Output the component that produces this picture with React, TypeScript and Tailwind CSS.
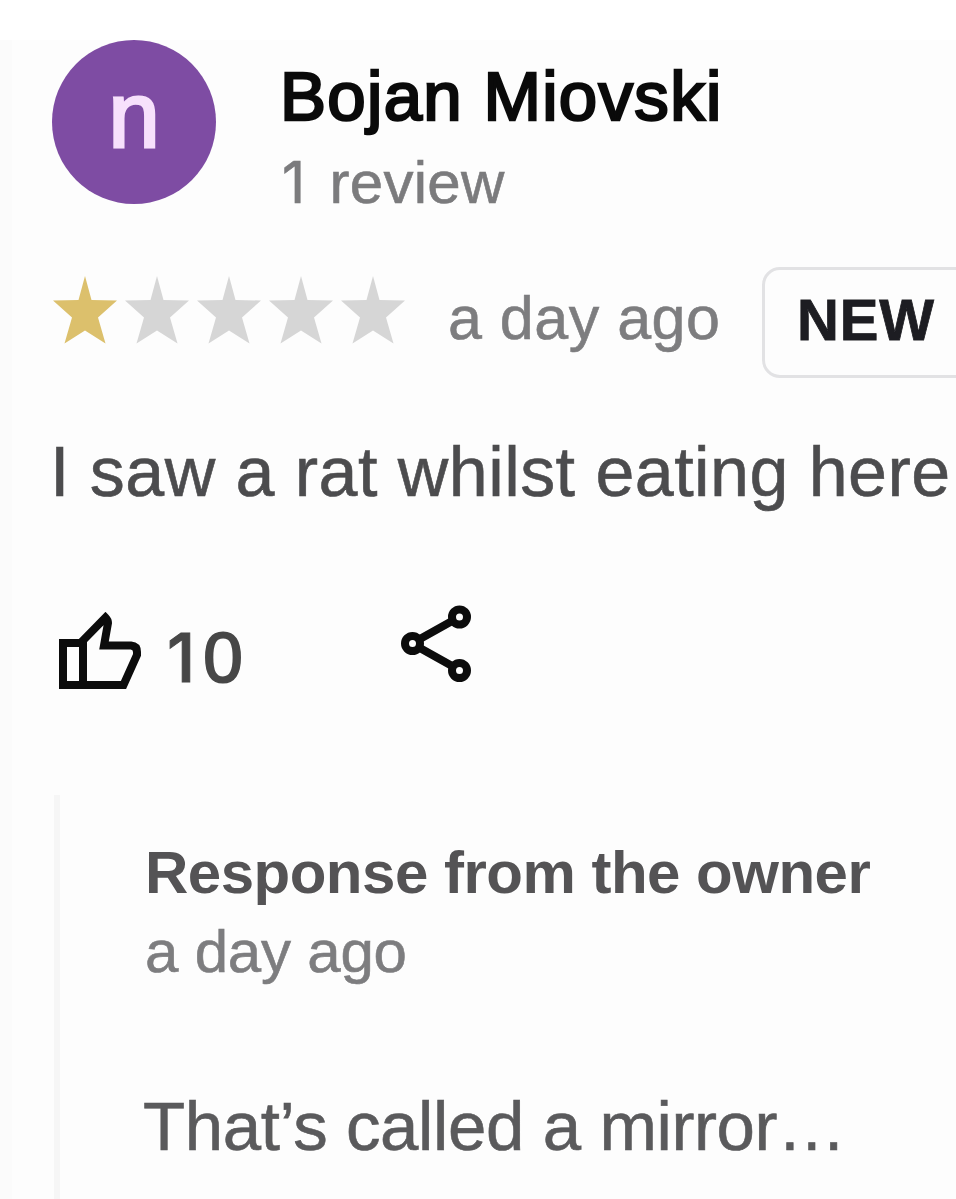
const STARS = [true, false, false, false, false];

function Star({ filled }: { filled: boolean }) {
  return (
    <svg viewBox="0 0 72 68" className={filled ? "h-[68px] w-[72px] text-[#dcc06c]" : "h-[68px] w-[72px] text-[#d6d6d6]"}>
      <path
        fill="currentColor"
        d="M36 0 L42.5 24 L68 24.5 L49 41.5 L56.5 67.5 L36 54.5 L15.5 67.5 L23 41.5 L4 24.5 L29.5 24 Z"
      />
    </svg>
  );
}

function ThumbUp() {
  return (
    <svg viewBox="0 0 84 78" className="h-[78px] w-[84px]" fill="none" stroke="#0c0c0c" strokeWidth="8">
      <path d="M5 31 H22.5 L47.5 5.5 Q50 8 50 11 L46 33.5 H73 Q79 34 79 40 V43 L65.5 73 H5 Z" />
      <path d="M25 29 V73" />
    </svg>
  );
}

function Share() {
  return (
    <svg viewBox="0 0 72 80" className="h-[80px] w-[72px]" fill="none" stroke="#0c0c0c" strokeWidth="8">
      <circle cx="11.5" cy="39.5" r="7.5" />
      <circle cx="58.5" cy="13" r="7.5" />
      <circle cx="58.5" cy="66.5" r="7.5" />
      <path d="M18 35.5 L52 16.5 M18 43.5 L52 62.5" />
    </svg>
  );
}

export default function App() {
  return (
    <div className="h-[1199px] w-[956px] overflow-hidden bg-white pt-10 font-['Liberation_Sans',Arial,sans-serif] whitespace-nowrap">
      <main className="h-[1159px] border-l-[12px] border-[#fbfbfb] bg-[#fdfdfd] pl-10">
        <header className="flex h-[227px]">
          <div className="flex h-[164px] w-[164px] shrink-0 justify-center rounded-full bg-[#7e4ca3] pt-[25px] text-[92px] leading-[100px] text-[#f7e1fc] [-webkit-text-stroke:3px_#f7e1fc]">
            n
          </div>
          <div className="ml-[64px] pt-[17px]">
            <h1 className="text-[69px] leading-[80px] tracking-[1.3px] text-[#0a0a0a] [-webkit-text-stroke:2.5px_#0a0a0a]">Bojan Miovski</h1>
            <p className="mt-[11px] text-[60px] leading-[70px] tracking-[0.3px] text-[#7b7b7d] [-webkit-text-stroke:0.6px_#7b7b7d]">
              <span className="ml-[2px] mr-[7px] font-['Inter'] text-[57px]">1</span> review
            </p>
          </div>
        </header>

        <section className="flex h-[111px] items-start">
          <div className="-ml-[3px] mt-[9px] flex shrink-0">
            {STARS.map((filled, i) => (
              <Star key={i} filled={filled} />
            ))}
          </div>
          <span className="ml-[39px] mt-[11px] w-[274px] shrink-0 text-[61px] leading-[80px] tracking-[0.5px] text-[#7d7d7f] [-webkit-text-stroke:0.6px_#7d7d7f]">a day ago</span>
          <div className="ml-[40px] h-[111px] w-[240px] shrink-0 rounded-[18px] border-[3px] border-[#e2e2e4] pl-[32px] pt-[10px] text-[58px] font-bold leading-[80px] tracking-[0.8px] text-[#1d1d22] [-webkit-text-stroke:0.8px_#1d1d22]">
            NEW
          </div>
        </section>

        <p className="-ml-[2px] mt-[54px] text-[70px] leading-[80px] tracking-[0.45px] text-[#4c4c4e] [-webkit-text-stroke:0.6px_#4c4c4e]">I saw a rat whilst eating here</p>

        <section className="mt-[92px] flex h-[86px] items-start">
          <div className="ml-[6px] mt-[8px]">
            <ThumbUp />
          </div>
          <span className="ml-[25px] mt-[13px] w-[85px] text-[71px] leading-[80px] text-[#474747] [-webkit-text-stroke:2px_#474747]">
            <span className="mr-[8px] font-['Inter'] text-[68px] font-medium [-webkit-text-stroke:1px_#474747]">1</span>0
          </span>
          <div className="ml-[149px]">
            <Share />
          </div>
        </section>

        <section className="mt-[105px] ml-[2px] h-[404px] border-l-[6px] border-[#f6f6f6] pl-[85px] pt-[43px]">
          <h2 className="text-[60px] font-bold leading-[70px] tracking-[-0.5px] text-[#545355]">Response from the owner</h2>
          <p className="mt-[9px] text-[60px] leading-[70px] tracking-[-0.2px] text-[#7d7d7f] [-webkit-text-stroke:0.6px_#7d7d7f]">a day ago</p>
          <p className="-ml-[2px] mt-[100px] text-[69px] leading-[80px] tracking-[-0.4px] text-[#5a5a5c] [-webkit-text-stroke:0.6px_#5a5a5c]">That’s called a mirror…</p>
        </section>
      </main>
    </div>
  );
}
